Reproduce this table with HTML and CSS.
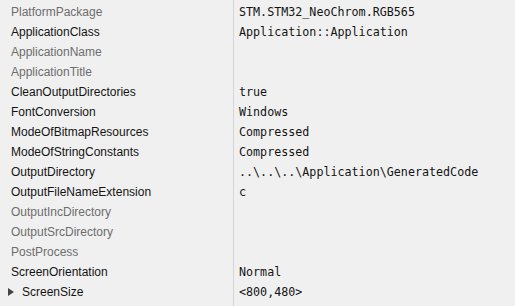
FILE: index.html
```html
<!DOCTYPE html>
<html>
<head>
<meta charset="utf-8">
<link rel="stylesheet" href="styles.css">
</head>
<body>
<div class="grid">
  <div class="name dim">PlatformPackage</div><div class="val">STM.STM32_NeoChrom.RGB565</div>
  <div class="name">ApplicationClass</div><div class="val">Application::Application</div>
  <div class="name dim">ApplicationName</div><div class="val"></div>
  <div class="name dim">ApplicationTitle</div><div class="val"></div>
  <div class="name">CleanOutputDirectories</div><div class="val">true</div>
  <div class="name">FontConversion</div><div class="val">Windows</div>
  <div class="name">ModeOfBitmapResources</div><div class="val">Compressed</div>
  <div class="name">ModeOfStringConstants</div><div class="val">Compressed</div>
  <div class="name">OutputDirectory</div><div class="val">..\..\..\Application\GeneratedCode</div>
  <div class="name">OutputFileNameExtension</div><div class="val">c</div>
  <div class="name dim">OutputIncDirectory</div><div class="val"></div>
  <div class="name dim">OutputSrcDirectory</div><div class="val"></div>
  <div class="name dim">PostProcess</div><div class="val"></div>
  <div class="name">ScreenOrientation</div><div class="val">Normal</div>
  <div class="name expand"><span class="tri"></span>ScreenSize</div><div class="val">&lt;800,480&gt;</div>
</div>
</body>
</html>
```
FILE: styles.css
```css
html, body {
  margin: 0;
  padding: 0;
  background: #f0f0f0;
}
.grid {
  display: grid;
  grid-template-columns: 233px 1fr;
  grid-auto-rows: 20px;
  align-content: start;
  height: 306px;
  box-sizing: border-box;
  padding-top: 2px;
  background: linear-gradient(#d5d5d5, #d5d5d5) 233px 0 / 1px 100% no-repeat;
}
.name {
  font-family: "Liberation Sans", Arial, sans-serif;
  font-size: 12px;
  color: #141414;
  padding-left: 11px;
  display: flex;
  align-items: center;
  white-space: nowrap;
}
.name.dim {
  color: #6d6d6d;
}
.name.expand {
  padding-left: 8px;
}
.tri {
  width: 0;
  height: 0;
  border-top: 4.5px solid transparent;
  border-bottom: 4.5px solid transparent;
  border-left: 6px solid #444;
  margin-right: 8px;
}
.val {
  font-family: "DejaVu Sans Mono", monospace;
  font-size: 11.7px;
  color: #141414;
  padding-left: 6px;
  display: flex;
  align-items: center;
  white-space: nowrap;
}
```
